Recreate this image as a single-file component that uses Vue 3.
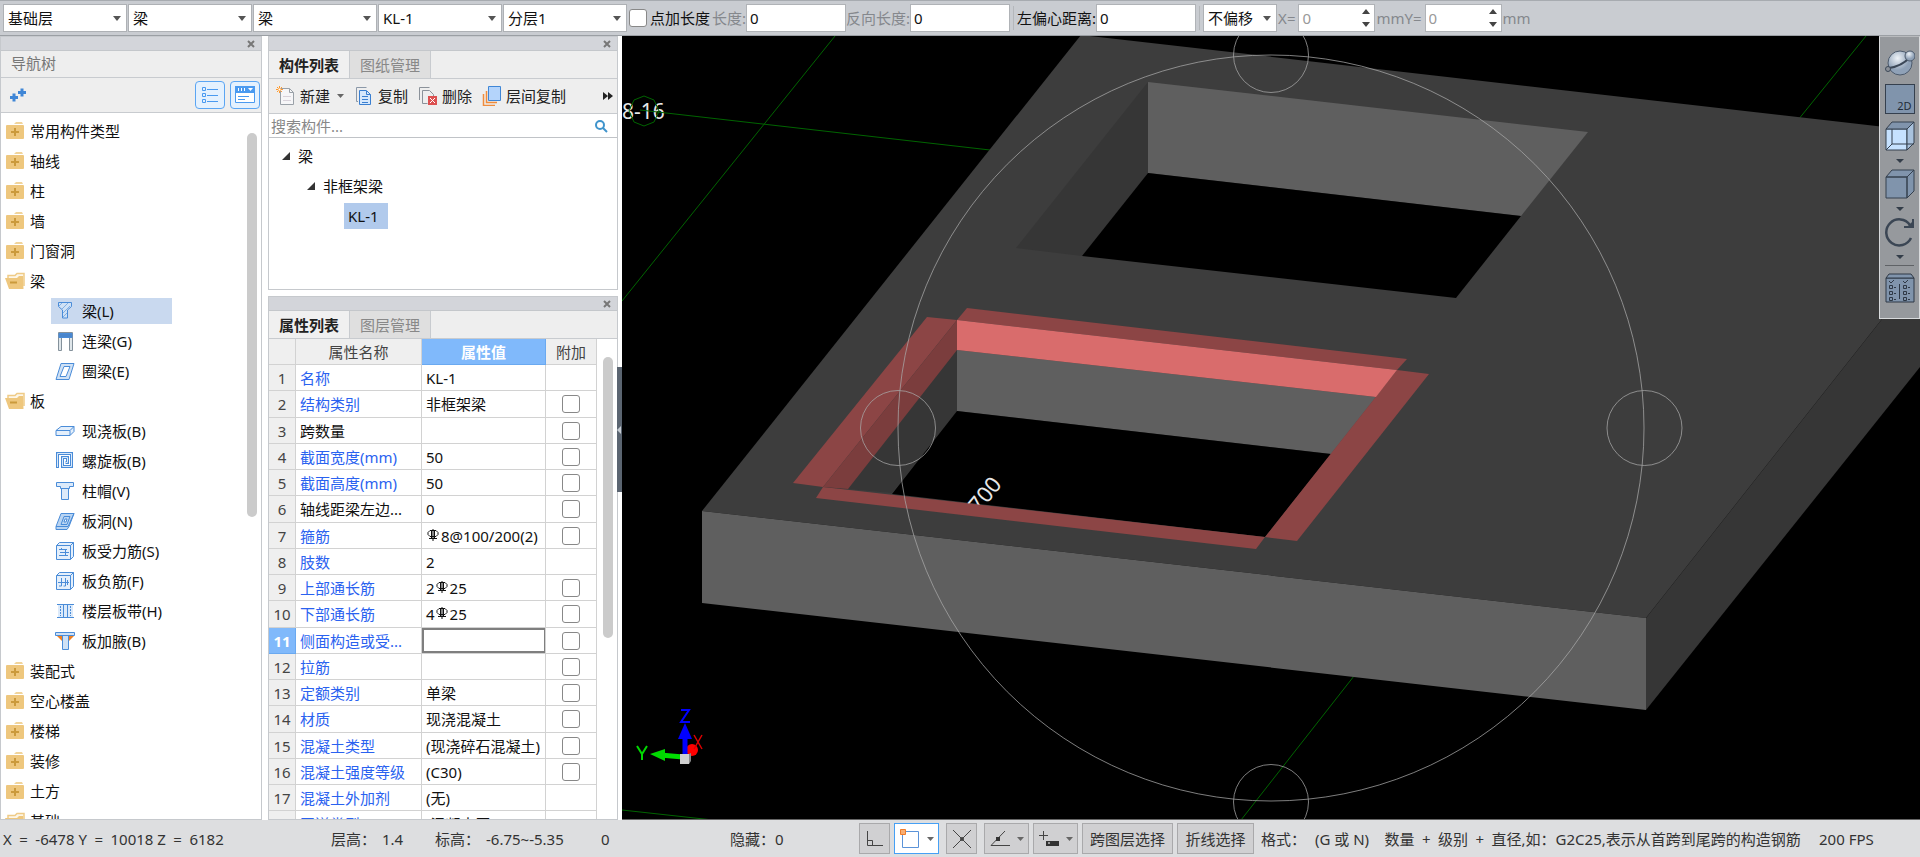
<script setup>
import { ref } from 'vue'

const filters = [
  { label: '楼层', value: '基础层' },
  { label: '构件大类', value: '梁' },
  { label: '构件类型', value: '梁' },
  { label: '构件', value: 'KL-1' },
  { label: '分层', value: '分层1' },
]

const nav = [
  { text: '常用构件类型', kind: 'closed' },
  { text: '轴线', kind: 'closed' },
  { text: '柱', kind: 'closed' },
  { text: '墙', kind: 'closed' },
  { text: '门窗洞', kind: 'closed' },
  { text: '梁', kind: 'open' },
  { text: '梁(L)', kind: 'beam' },
  { text: '连梁(G)', kind: 'link' },
  { text: '圈梁(E)', kind: 'ring' },
  { text: '板', kind: 'open' },
  { text: '现浇板(B)', kind: 'slab' },
  { text: '螺旋板(B)', kind: 'spiral' },
  { text: '柱帽(V)', kind: 'cap' },
  { text: '板洞(N)', kind: 'hole' },
  { text: '板受力筋(S)', kind: 'rebar' },
  { text: '板负筋(F)', kind: 'negbar' },
  { text: '楼层板带(H)', kind: 'strip' },
  { text: '板加腋(B)', kind: 'haunch' },
  { text: '装配式', kind: 'closed' },
  { text: '空心楼盖', kind: 'closed' },
  { text: '楼梯', kind: 'closed' },
  { text: '装修', kind: 'closed' },
  { text: '土方', kind: 'closed' },
  { text: '基础', kind: 'open' },
].map((n) => ({ ...n, group: n.kind === 'closed' || n.kind === 'open' }))

const selected = ref('梁(L)')

const props = [
  { name: '名称', value: 'KL-1', blue: true },
  { name: '结构类别', value: '非框架梁', blue: true, check: true },
  { name: '跨数量', value: '', check: true },
  { name: '截面宽度(mm)', value: '50', blue: true, check: true },
  { name: '截面高度(mm)', value: '50', blue: true, check: true },
  { name: '轴线距梁左边...', value: '0', check: true },
  { name: '箍筋', pre: '', value: '8@100/200(2)', rebar: true, blue: true, check: true },
  { name: '肢数', value: '2', blue: true },
  { name: '上部通长筋', pre: '2', value: '25', rebar: true, blue: true, check: true },
  { name: '下部通长筋', pre: '4', value: '25', rebar: true, blue: true, check: true },
  { name: '侧面构造或受...', value: '', blue: true, check: true, active: true },
  { name: '拉筋', value: '', blue: true, check: true },
  { name: '定额类别', value: '单梁', blue: true, check: true },
  { name: '材质', value: '现浇混凝土', blue: true, check: true },
  { name: '混凝土类型', value: '(现浇碎石混凝土)', blue: true, check: true },
  { name: '混凝土强度等级', value: '(C30)', blue: true, check: true },
  { name: '混凝土外加剂', value: '(无)', blue: true },
  { name: '泵送类型', value: '(混凝土泵)', blue: true },
]
</script>

<template>
  <div class="app">
    <header class="topbar">
      <label v-for="f in filters" :key="f.label" class="pick">
        <select :aria-label="f.label"><option>{{ f.value }}</option></select>
        <svg class="caret" width="8" height="5" viewBox="0 0 8 5"><path d="M0 0h8L4 5z" /></svg>
      </label>
      <label class="point"><input type="checkbox" class="check" />点加长度</label>
      <label class="field"><span class="dim">长度:</span><input type="text" value="0" /></label>
      <label class="field"><span class="dim">反向长度:</span><input type="text" value="0" /></label>
      <i class="split"></i>
      <label class="field"><span>左偏心距离:</span><input type="text" value="0" /></label>
      <i class="split"></i>
      <label class="pick short">
        <select aria-label="偏移方式"><option>不偏移</option></select>
        <svg class="caret" width="8" height="5" viewBox="0 0 8 5"><path d="M0 0h8L4 5z" /></svg>
      </label>
      <label class="spin dim"><span>X=</span>
        <span class="spinbox"><input type="number" value="0" />
          <svg width="8" height="18" viewBox="0 0 8 18"><path d="M0 5h8L4 0zM0 13h8l-4 5z" /></svg></span>
      </label>
      <label class="spin dim"><span>mmY=</span>
        <span class="spinbox"><input type="number" value="0" />
          <svg width="8" height="18" viewBox="0 0 8 18"><path d="M0 5h8L4 0zM0 13h8l-4 5z" /></svg></span>
      </label>
      <span class="dim unit">mm</span>
    </header>

    <main class="work">
      <section class="panel nav">
        <div class="caption"><button aria-label="关闭导航树"><svg width="8" height="8" viewBox="0 0 8 8"><path d="M1 1l6 6M7 1L1 7" /></svg></button></div>
        <h2 class="title">导航树</h2>
        <div class="navtools">
          <button class="plus" aria-label="添加">
            <svg width="16" height="14" viewBox="0 0 16 14"><path d="M0 9.500h8M4 5.500v8M8 4.500h8M12 .500v8" stroke="#3f86d6" stroke-width="3" fill="none" /></svg>
          </button>
          <button class="view" aria-label="列表视图">
            <svg width="18" height="18" viewBox="0 0 18 18" fill="none" stroke="#4a9af0"><path d="M1.500 1.500h3v3h-3zM1.500 7.500h3v3h-3zM1.500 13.500h3v3h-3zM6 3.500h11M6 9.500h11M6 15.500h11" /></svg>
          </button>
          <button class="view" aria-label="面板视图">
            <svg width="20" height="18" viewBox="0 0 20 18"><path d="M.5.500h19v16H.500z" fill="#fff" stroke="#4a9af0" /><path d="M0 0h20v7H0z" fill="#4a9af0" /><path d="M3.500 2v3M6.500 2v3M9.500 2v3" stroke="#fff" /><path d="M3 10.500h11M3 13.500h7" stroke="#4a9af0" /><path d="M13 2h5l-2.500 3z" fill="#fff" /></svg>
          </button>
        </div>
        <ul class="tree">
          <li v-for="(n, i) in nav" :key="i" :class="{ child: !n.group, on: n.text === selected }">
            <button @click="selected = n.text">
              <svg v-if="n.kind === 'closed'" width="20" height="18" viewBox="0 0 20 18"><path d="M9 2l2-2h6l1 2z" fill="#f1d49b" /><path d="M1 4q0-1 1-1h16q1 0 1 1v12q0 1-1 1H2q-1 0-1-1z" fill="#eec77e" /><path d="M6 10h8M10 6v8" stroke="#cb9a3c" stroke-width="2" /></svg>
              <svg v-else-if="n.kind === 'open'" width="20" height="18" viewBox="0 0 20 18"><path d="M3 6V3.500h7l2-2h7V14" fill="#fdf6e8" stroke="#efcb87" stroke-width="1.500" /><path d="M0 6h12l2-2h4l.5 13H4z" fill="#eec77e" /><path d="M5 10.500h7" stroke="#cb9a3c" stroke-width="2" /></svg>
              <svg v-else class="kid" width="20" height="20" viewBox="0 0 20 20">
                <template v-if="n.kind === 'beam'"><path d="M3.500 1.500h13v4l-4 3.500v8h-5V9l-4-3.500z" fill="#cfe1f5" /><path d="M4 5l3-3M7 8l6-6M8 12l7-7M8 16l4-4" stroke-opacity=".6" /></template>
                <template v-else-if="n.kind === 'link'"><path d="M3.500 1.500h14v18h-3v-13h-8v13h-3z" fill="#dfe6ea" stroke="#84919b" /><path d="M4 2.500h13v4H4z" fill="#4a86cc" /></template>
                <template v-else-if="n.kind === 'ring'"><path d="M6 2.500h13l-5 16H1zM9 5.500h6l-4 10H5z" fill="#cfe1f5" fill-rule="evenodd" /></template>
                <template v-else-if="n.kind === 'slab'"><path d="M1 9.500l5-4h13v5l-4 4H1zM1 9.500h14v5M15 9.500l4-4" fill="#e4effb" /></template>
                <template v-else-if="n.kind === 'spiral'"><path d="M2.500 17V2.500h14v13h-9v-9h5v5h-2" fill="none" stroke-width="3" /><path d="M2.500 16V2.500h14v13h-9v-9h5v5h-2" fill="none" stroke="#dceafa" /></template>
                <template v-else-if="n.kind === 'cap'"><path d="M1.500 1.500h17v4h-4v2h-9v-2h-4zM6.500 7.500h7v11h-7z" fill="#dceafa" /></template>
                <template v-else-if="n.kind === 'hole'"><path d="M6 2.500h13l-5 13-2 3H1v-3z" fill="#b9d4f2" /><path d="M9 5.500h6l-3 8H6zM1 15.500h12l6-13" /><path d="M10 8h2l-1 3H9z" fill="#fff" /></template>
                <template v-else-if="n.kind === 'rebar'"><path d="M1.500 4.500l3-3h14v14l-3 3h-14zM1.500 4.500h14v14M15.500 4.500l3-3" fill="#e4effb" /><path d="M4 8.500h8M5 11.500h9M4 14.500h9M6.500 7v2M10.500 8v7" /></template>
                <template v-else-if="n.kind === 'negbar'"><path d="M1.500 4.500l3-3h14v14l-3 3h-14zM1.500 4.500h14v14M15.500 4.500l3-3" fill="#e4effb" /><path d="M3 11.500h11M6.500 7v8H4M10.500 7v8h-2M12.500 9v5" /></template>
                <template v-else-if="n.kind === 'strip'"><path d="M3 4h15v12H3z" fill="#dceafa" stroke="none" /><path d="M2 3.500h17M2 16.500h17M8.500 4v12M12.500 4v12" /><path d="M5.500 5v10M15.500 5v10" stroke-dasharray="2 1" /></template>
                <template v-else><path d="M2 5h17l-6 6H8z" fill="#f08020" stroke="none" /><path d="M.5 1.500h19v3H.500zM7.500 4.500h6v14h-6z" fill="#cfe1f5" /></template>
              </svg>
              <span>{{ n.text }}</span>
            </button>
          </li>
        </ul>
        <i class="thumb navthumb"></i>
      </section>

      <div class="middle">
        <section class="panel list">
          <div class="caption"><button aria-label="关闭构件列表"><svg width="8" height="8" viewBox="0 0 8 8"><path d="M1 1l6 6M7 1L1 7" /></svg></button></div>
          <div class="tabs"><button class="tab cur">构件列表</button><button class="tab">图纸管理</button></div>
          <div class="tools">
            <button><svg width="20" height="20" viewBox="0 0 20 20"><path d="M4.500 2.500h9l4 4v12h-13z" fill="#f6f6f8" stroke="#9aa1a8" /><path d="M13.500 2.500v4h4" fill="none" stroke="#9aa1a8" /><path d="M7 10.500h8M7 14.500h8" stroke="#d8d2da" /><path d="M3.500 0v7M0 3.500h7M1 1l5 5M6 1L1 6" stroke="#ff9a2e" /><path d="M2.500 2.500h2v2h-2z" fill="#fff" /></svg>新建<svg class="drop" width="7" height="4" viewBox="0 0 7 4"><path d="M0 0h7L3.500 4z" /></svg></button>
            <button><svg width="20" height="20" viewBox="0 0 20 20"><path d="M4 15.500H2.500v-14h10" fill="none" stroke="#8b98a8" /><path d="M5.500 4.500h7l4 4v10h-11z" fill="#d6e8fc" stroke="#3a7fd0" /><path d="M8 10.500h6M8 13.500h6M8 16.500h6M12.500 5v3.500h4" fill="none" stroke="#3a7fd0" /></svg>复制</button>
            <button><svg width="20" height="20" viewBox="0 0 20 20"><path d="M1.500 14V1.500h10M4.500 17.500v-13h7l4 4v2M4.500 17.500h5" fill="none" stroke="#8b929a" /><path d="M10 10h9v9h-9z" fill="#dc5050" /><path d="M12 12l5 5M17 12l-5 5" stroke="#fff" /></svg>删除</button>
            <button><svg width="20" height="20" viewBox="0 0 20 20"><path d="M1.500 8v11.500H13M4.500 5v11.500H15" fill="none" stroke="#f08c3c" stroke-width="1.500" /><path d="M6.500.500h12v14h-12z" fill="#b4d4fb" stroke="#3f86d6" /></svg>层间复制</button>
            <button class="more" aria-label="更多"><svg width="10" height="8" viewBox="0 0 10 8"><path d="M0 0l5 4-5 4zM5 0l5 4-5 4z" fill="#222" /></svg></button>
          </div>
          <label class="search">
            <input type="text" placeholder="搜索构件..." aria-label="搜索构件" />
            <svg width="14" height="14" viewBox="0 0 14 14" fill="none" stroke="#3f94cc" stroke-width="2"><circle cx="6" cy="6" r="4" /><path d="M9 9l4 4" /></svg>
          </label>
          <ul class="parts">
            <li class="l1"><svg width="8" height="8" viewBox="0 0 8 8"><path d="M8 0v8H0z" /></svg>梁</li>
            <li class="l2"><svg width="8" height="8" viewBox="0 0 8 8"><path d="M8 0v8H0z" /></svg>非框架梁</li>
            <li class="l3"><span>KL-1</span></li>
          </ul>
        </section>

        <section class="panel attrs">
          <div class="caption"><button aria-label="关闭属性列表"><svg width="8" height="8" viewBox="0 0 8 8"><path d="M1 1l6 6M7 1L1 7" /></svg></button></div>
          <div class="tabs"><button class="tab cur">属性列表</button><button class="tab">图层管理</button></div>
          <div class="gridbox">
            <table>
              <colgroup><col class="c0" /><col class="c1" /><col class="c2" /><col class="c3" /></colgroup>
              <thead><tr><th></th><th>属性名称</th><th class="hot">属性值</th><th>附加</th></tr></thead>
              <tbody>
                <tr v-for="(p, i) in props" :key="i" :class="{ active: p.active }">
                  <th>{{ i + 1 }}</th>
                  <td :class="{ blue: p.blue }">{{ p.name }}</td>
                  <td class="val">
                    <input v-if="p.active" type="text" :aria-label="p.name" />
                    <template v-else-if="p.rebar">{{ p.pre }}<svg class="rebar-mark" width="12" height="13" viewBox="0 0 12 13" fill="none" stroke="#111"><path d="M3 1.500h6l2 2v2l-2 2H3l-2-2v-2zM4.500 1.500v8M7.500 1.500v8M2 9.500h8M6 0v12" /></svg>{{ p.value }}</template>
                    <template v-else>{{ p.value }}</template>
                  </td>
                  <td class="add"><input v-if="p.check" type="checkbox" class="check" :aria-label="p.name + ' 附加'" /></td>
                </tr>
              </tbody>
            </table>
            <i class="thumb gridthumb"></i>
          </div>
        </section>
      </div>

      <section class="view3d">
        <svg class="scene" viewBox="622 36 1298 784" preserveAspectRatio="xMinYMin slice">
          <text x="622" y="119" class="axis">8-16</text>
          <g stroke="#006400" fill="none">
            <path d="M835 36L622 301M640 110L990 150M1866 36L1798 120M1354 676L1241 820M622 810L722 821" />
            <path d="M644 96l10 4 5 11-5 11-10 4-10-4-5-11 5-11z" />
          </g>
          <path d="M1081 35L1920 131V271L1646 618 702 511z" fill="#3d3d3d" />
          <path d="M702 511L1646 618V710L702 603z" fill="#5f5f5f" />
          <path d="M1646 618L1920 271V367L1646 710z" fill="#363636" />
          <path d="M1148 82V173L1082 256 1016 248z" fill="#363636" />
          <path d="M1148 82L1588 132 1521 216 1148 173z" fill="#5f5f5f" />
          <path d="M1148 173L1521 216 1456 298 1082 256z" fill="#000" />
          <path d="M957 320V411L892 493 848 489 823 487z" fill="#363636" />
          <path d="M957 350L1376 397 1331 454 957 411z" fill="#5f5f5f" />
          <path d="M957 411L1331 454 1265 537 892 494z" fill="#000" />
          <text class="dimtext" transform="translate(979 514) rotate(-51)">700</text>
          <g fill="#8c4545">
            <path d="M967 308L1407 359 1397 370 957 320z" />
            <path d="M927 317L957 320 823 487 793 483z" />
            <path d="M1397 370L1429 374 1297 541 1265 537z" />
            <path d="M823 487L1265 537 1256 549 816 498z" />
          </g>
          <path d="M957 320V350L848 489 823 487z" fill="#7b3d3d" />
          <path d="M957 320L1397 370 1376 397 957 350z" fill="#d96c6c" />
          <g fill="none" stroke="#a8a8a8" stroke-opacity=".75">
            <circle cx="1271" cy="428" r="373" />
            <circle cx="1271" cy="55" r="37.500" /><circle cx="898" cy="428" r="37.500" />
            <circle cx="1644.500" cy="428" r="37.500" /><circle cx="1271" cy="802" r="37.500" />
          </g>
          <circle cx="692" cy="750" r="6" fill="#f00" />
          <path d="M694 735l8 14M702 735l-8 14" stroke="#d00" stroke-width="1.500" fill="none" />
          <path d="M683 757L660 755" stroke="#00e000" stroke-width="5" />
          <path d="M650 754l15-5v12z" fill="#00d800" />
          <path d="M685 756V736" stroke="#00f" stroke-width="5" />
          <path d="M678 739h14l-7-16z" fill="#00f" />
          <path d="M681 710h8l-8 12h9" stroke="#00f" stroke-width="2" fill="none" />
          <path d="M637 746l5 8 5-8M642 754v6" stroke="#00d800" stroke-width="2" fill="none" />
          <path d="M680 754h9v10h-9z" fill="#d0d0d0" /><path d="M689 754l2-1v8l-2 3z" fill="#888" />
        </svg>
        <button class="handle" aria-label="收起面板"><svg width="4" height="8" viewBox="0 0 4 8"><path d="M4 0v8L0 4z" fill="#c5cbd2" /></svg></button>
        <nav class="viewbar">
          <button aria-label="动态观察"><svg width="30" height="28" viewBox="0 0 30 28"><defs><radialGradient id="ball" cx=".4" cy=".3"><stop offset="0" stop-color="#eef3f8" /><stop offset="1" stop-color="#8fa1b7" /></radialGradient></defs><circle cx="15" cy="14" r="12" fill="url(#ball)" stroke="#4c5a6c" /><path d="M4 19Q17 17 24 9" stroke="#3c4858" stroke-width="2" fill="none" /><circle cx="25" cy="7" r="5" fill="url(#ball)" stroke="#4c5a6c" /><circle cx="3" cy="20" r="2.500" fill="#8b9098" stroke="#3c4858" /></svg></button>
          <button class="two" aria-label="二维"><span>2D</span></button>
          <button aria-label="线框"><svg width="30" height="30" viewBox="0 0 30 30" stroke="#35404e"><path d="M1 8h21v21H1z" fill="#c6e2ff" /><path d="M1 8l6-7h22l-7 7z" fill="#8094ac" /><path d="M22 8l7-7v21l-7 7z" fill="#a9c2dd" /><path d="M7 8v15h15M7 23l-6 6M22 23h7" fill="none" /></svg></button>
          <svg class="tick" width="8" height="4" viewBox="0 0 8 4"><path d="M0 0h8L4 4z" /></svg>
          <button aria-label="着色"><svg width="30" height="30" viewBox="0 0 30 30" stroke="#35404e" fill="#8094ac"><path d="M1 8h21v21H1zM1 8l6-7h22l-7 7zM22 8l7-7v21l-7 7z" /></svg></button>
          <svg class="tick" width="8" height="4" viewBox="0 0 8 4"><path d="M0 0h8L4 4z" /></svg>
          <button aria-label="旋转"><svg width="30" height="30" viewBox="0 0 30 30" fill="none" stroke="#3b4654" stroke-width="2.500"><path d="M26 21A13 13 0 1 1 25 8" /><path d="M28 2v8h-9" stroke-width="2" /><path d="M28 4v6h-6z" fill="#3b4654" stroke="none" /></svg></button>
          <svg class="tick" width="8" height="4" viewBox="0 0 8 4"><path d="M0 0h8L4 4z" /></svg>
          <i class="rule"></i>
          <button aria-label="显示设置"><svg width="30" height="30" viewBox="0 0 30 30" fill="none" stroke="#2f3946"><path d="M1 5h28v24H1z" fill="#8094ac" /><path d="M1 5l3-4h22l3 4z" fill="#8094ac" /><path d="M4 8l2 2 3-3M18 8l2 2 3-3M4.500 12.500h3v3h-3zM4.500 18.500h3v3h-3zM4.500 24.500h3v3h-3zM18.500 12.500h3v3h-3zM18.500 18.500h3v3h-3zM18.500 24.500h3v3h-3zM9 14.500h2M9 20.500h2M9 26.500h2M23 14.500h2M23 20.500h2M23 26.500h2M14.500 11v15" /></svg></button>
        </nav>
      </section>
    </main>

    <footer class="status">
      <span class="s-pos">X&ensp;=&ensp;-6478 Y&ensp;=&ensp;10018 Z&ensp;=&ensp;6182</span>
      <span class="s-h">层高：</span><span class="s-hv">1.4</span>
      <span class="s-e">标高：</span><span class="s-ev">-6.75~-5.35</span>
      <span class="s-z">0</span>
      <span class="s-hide">隐藏：</span><span class="s-hidev">0</span>
      <div class="btns">
        <button class="sq" aria-label="正交"><svg width="18" height="18" viewBox="0 0 18 18" fill="none" stroke="#444"><path d="M1.500 1v14.500H17M1.500 10.500h5v5" /></svg></button>
        <button class="dd lit" aria-label="对象捕捉"><svg width="20" height="20" viewBox="0 0 20 20"><path d="M2.500 2.500h16v16h-16z" fill="none" stroke="#5b93d8" /><path d="M.5.500h5v5h-5z" fill="#f9ae72" stroke="#ef7d2c" /></svg><svg class="drop" width="7" height="4" viewBox="0 0 7 4"><path d="M0 0h7L3.500 4z" /></svg></button>
        <button class="sq cross" aria-label="交点捕捉"><svg width="20" height="20" viewBox="0 0 20 20" fill="none" stroke="#444"><path d="M1 1l18 18M19 1L1 19" /><circle cx="10" cy="10" r="2" fill="#444" stroke="none" /></svg></button>
        <button class="dd" aria-label="角度"><svg width="20" height="18" viewBox="0 0 20 18"><path d="M15 1L1 15.500h19" fill="none" stroke="#444" /><path d="M6 7h4v4H6z" fill="#333" /></svg><svg class="drop" width="7" height="4" viewBox="0 0 7 4"><path d="M0 0h7L3.500 4z" /></svg></button>
        <button class="dd" aria-label="动态输入"><svg width="20" height="18" viewBox="0 0 20 18"><path d="M0 5.500h9M4.500 1v9" stroke="#444" /><path d="M7 11h13v5H7z" fill="#333" /><path d="M9 13h2" stroke="#fff" /></svg><svg class="drop" width="7" height="4" viewBox="0 0 7 4"><path d="M0 0h7L3.500 4z" /></svg></button>
        <button class="wide">跨图层选择</button>
        <button class="wide second">折线选择</button>
      </div>
      <span class="s-f">格式：</span>
      <span class="s-fmt">(G 或 N)&nbsp;&ensp; 数量&ensp;+&ensp;级别&ensp;+&ensp;直径,如：G2C25,表示从首跨到尾跨的构造钢筋</span>
      <span class="s-fps">200 FPS</span>
    </footer>
  </div>
</template>

<style>
body { margin: 0; overflow: hidden; }
</style>

<style scoped>
* { box-sizing: border-box; }
.app {
  height: 100vh; display: grid; grid-template-rows: auto minmax(0, 1fr) auto;
  font: 15px/20px "Noto Sans", "Noto Sans CJK SC", sans-serif; color: #222; background: #fff;
}
button, input, select { font: inherit; color: inherit; margin: 0; }
button { background: none; border: 0; padding: 0; display: flex; align-items: center; white-space: nowrap; }
ul { list-style: none; margin: 0; padding: 0; }
svg { flex: none; display: block; }

.topbar { height: 36px; padding: 0 3px; border-top: 1px solid #a7abb0; border-bottom: 1px solid #9b9fa4; background: #c9ccd1; display: flex; align-items: center; color: #111; white-space: nowrap; }
.pick { display: grid; width: 124px; margin-right: 1px; align-items: center; }
.pick select { grid-area: 1 / 1; width: 100%; height: 28px; padding: 0 4px; appearance: none; background: #fff; border: 1px solid #aeb1b5; border-radius: 0; color: #111; }
.caret { grid-area: 1 / 1; justify-self: end; margin-right: 6px; fill: #555; pointer-events: none; }
.pick.short { width: 74px; }
.check { appearance: none; width: 18px; height: 18px; border: 1px solid #888; border-radius: 3px; background: #fff; flex: none; display: block; }
.point { display: flex; align-items: center; gap: 3px; width: 84px; padding-left: 1px; }
.dim { color: #85888d; }
.field { display: flex; align-items: center; justify-content: flex-end; }
.field input { width: 100px; height: 28px; padding: 0 3px; border: 1px solid #b0b3b7; background: #fff; color: #111; }
.split { width: 1px; height: 24px; margin: 0 3px; background: #b4b7bb; }
.spin { display: flex; align-items: center; }
.spinbox { display: grid; align-items: center; margin: 0 1px 0 3px; }
.spinbox input { grid-area: 1 / 1; width: 77px; height: 28px; padding: 0 3px; border: 1px solid #b0b3b7; background: #fff; color: #999; appearance: textfield; }
.spinbox input::-webkit-inner-spin-button { appearance: none; display: none; }
.spinbox svg { grid-area: 1 / 1; justify-self: end; margin-right: 5px; fill: #444; }

.work { display: grid; grid-template-columns: 262px 350px minmax(0, 1fr); column-gap: 6px; min-height: 0; }
.panel { border: 1px solid #c6c9cd; background: #fff; display: flex; flex-direction: column; min-height: 0; position: relative; overflow: hidden; }
.caption { height: 14px; flex: none; background: #d3d5da; border-bottom: 1px solid #c4c7cb; display: flex; align-items: center; justify-content: flex-end; padding-right: 6px; }
.caption svg { fill: none; stroke: #777; stroke-width: 2; }
.title { margin: 0; height: 27px; flex: none; padding-left: 10px; font-size: 15px; font-weight: 400; line-height: 25px; color: #777; background: #eee; border-bottom: 1px solid #c8cbcf; }
.navtools { height: 35px; flex: none; display: flex; align-items: center; gap: 5px; padding: 0 1px 0 9px; background: #eee; border-bottom: 1px solid #c8cbcf; }
.plus { margin-right: auto; }
.view { width: 30px; height: 28px; justify-content: center; border: 1px solid #5aa5f3; border-radius: 4px; background: #e4f1fe; }
.tree { padding-top: 3px; overflow: hidden; flex: 1; min-height: 0; }
.tree li { height: 30px; display: flex; align-items: center; padding-left: 4px; }
.tree button { height: 26px; gap: 5px; color: #111; }
.tree .child { padding-left: 50px; }
.tree .child button { width: 121px; padding-left: 4px; gap: 7px; }
.tree .on button { background: #c9d9ef; }
.kid { stroke: #4a8cd8; fill: none; }
.thumb { position: absolute; width: 10px; border-radius: 5px; background: #cbcbcb; }
.navthumb { right: 4px; top: 96px; height: 384px; }

.middle { display: grid; grid-template-rows: 254px minmax(0, 1fr); row-gap: 6px; min-height: 0; }
.tabs { height: 28px; flex: none; display: flex; background: #eee; border-bottom: 1px solid #c8cbcf; }
.tab { width: 81px; justify-content: center; color: #888; background: #dfdfdf; border-right: 1px solid #c8cbcf; }
.tab.cur { background: #f0f0f0; color: #222; font-weight: 700; }
.tools { height: 35px; flex: none; display: flex; align-items: center; padding: 0 4px 0 7px; gap: 10px; background: #eee; border-bottom: 1px solid #c8cbcf; }
.tools button { gap: 4px; }
.drop { fill: #666; margin-left: 3px; }
.more { margin-left: auto; }
.search { height: 24px; flex: none; display: flex; align-items: center; padding: 0 9px 0 2px; border-bottom: 1px solid #c0c3c7; }
.search input { flex: 1; min-width: 0; height: 22px; padding: 0; border: 0; outline: 0; }
.search input::placeholder { color: #888; opacity: 1; }
.parts { padding-top: 3px; }
.parts li { height: 30px; display: flex; align-items: center; gap: 8px; color: #111; }
.parts svg { fill: #333; }
.l1 { padding-left: 13px; }
.l2 { padding-left: 38px; }
.l3 { padding-left: 75px; }
.l3 span { width: 44px; padding: 3px 0 3px 4px; background: #b1caec; }

.gridbox { flex: 1; min-height: 0; overflow: hidden; position: relative; }
table { table-layout: fixed; width: 328px; border-collapse: separate; border-spacing: 0; }
.c0 { width: 27px; } .c1 { width: 126px; } .c2 { width: 124px; } .c3 { width: 51px; }
th, td { height: 26px; padding: 0 0 0 4px; border-right: 1px solid #d2d2d2; border-bottom: 1px solid #d2d2d2; font-weight: 400; text-align: left; white-space: nowrap; overflow: hidden; line-height: 20px; color: #111; }
tbody tr:nth-child(4n + 2) > * { height: 27px; }
th { padding: 0; text-align: center; background: #efefef; color: #444; }
th.hot, .active th { background: #80b9fb; color: #fff; font-weight: 700; border-color: #6aa9f0; }
td.blue { color: #2a62f0; }
.val input { display: block; width: 124px; height: 25px; margin-left: -4px; border: 2px solid #7f7f7f; outline: 0; padding: 0 2px; }
.rebar-mark { display: inline-block; vertical-align: 0; margin: 0 2px 0 1px; }
.add { padding: 0; }
.add .check { margin: 0 auto; }
.gridthumb { right: 4px; top: 18px; height: 281px; }

.view3d { position: relative; min-width: 0; min-height: 0; background: #000; margin-left: -2px; border-bottom: 1px solid #666; overflow: visible; }
.scene { width: 100%; height: 100%; }
.axis { font-size: 21px; fill: #e8e8e8; }
.dimtext { font-size: 22px; fill: #e8e8e8; }
.handle { position: absolute; left: -5px; top: 331px; width: 5px; height: 125px; background: #5b6571; }
.viewbar { position: absolute; right: 0; top: 0; width: 41px; height: 283px; padding-top: 12px; display: flex; flex-direction: column; align-items: center; background: #96999d; border: 1px solid #d8dadc; border-top-color: #b8babd; }
.viewbar button { flex: none; margin-bottom: 7px; }
.two { width: 30px; height: 30px; border: 1px solid #35404e; background: #8094ac; justify-content: flex-end; align-items: flex-end; padding-right: 2px; font-size: 11px; line-height: 14px; color: #222c38; }
.tick { fill: #333d49; margin: 1px 0 6px; }
.rule { width: 29px; height: 1px; background: #5f6266; margin-bottom: 7px; }

.status { height: 37px; padding-left: 3px; display: flex; align-items: center; background: #dddee0; color: #333; white-space: nowrap; }
.s-pos { width: 328px; }
.s-h { width: 51px; } .s-hv { width: 53px; } .s-e { width: 51px; } .s-ev { width: 115px; }
.s-z { width: 129px; } .s-hide { width: 45px; } .s-hidev { width: 84px; }
.btns { display: flex; align-items: center; }
.btns button { height: 31px; justify-content: center; background: #d0d0d2; border: 1px solid #a9a9ab; margin-right: 4px; }
.btns .sq { width: 31px; }
.btns .dd { width: 45px; gap: 4px; }
.btns .lit { background: #fff; border-color: #46a0f5; margin-right: 7px; }
.btns .cross { margin-right: 7px; }
.btns .wide { width: 91px; }
.btns .second { width: 77px; margin-right: 7px; }
.s-f { width: 54px; }
.s-fmt { width: 504px; }
</style>
